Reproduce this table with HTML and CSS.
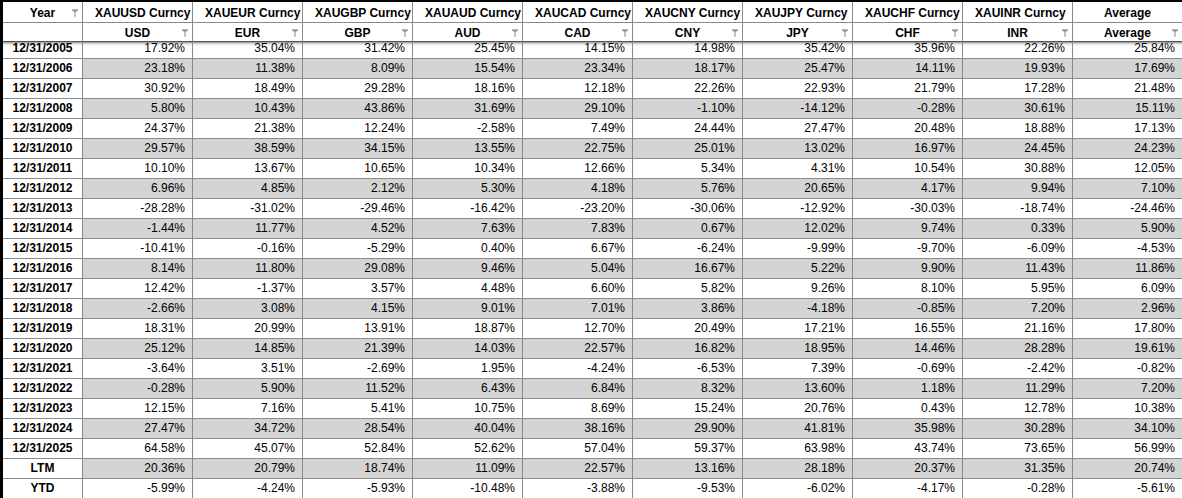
FILE: index.html
```html
<!DOCTYPE html>
<html>
<head>
<meta charset="utf-8">
<link rel="stylesheet" href="styles.css">
</head>
<body>
<div class="frame">
  <div class="head">
    <div class="hrow r1">
      <div class="h f"><span></span><span class="lbl">Year</span><svg class="fi" viewBox="0 0 7 9"><path d="M0 0H7V1.6L4.2 3.6V9H2.8V3.6L0 1.6Z"/></svg></div>
      <div class="h"><span class="lbl">XAUUSD Curncy</span></div>
      <div class="h"><span class="lbl">XAUEUR Curncy</span></div>
      <div class="h"><span class="lbl">XAUGBP Curncy</span></div>
      <div class="h"><span class="lbl">XAUAUD Curncy</span></div>
      <div class="h"><span class="lbl">XAUCAD Curncy</span></div>
      <div class="h"><span class="lbl">XAUCNY Curncy</span></div>
      <div class="h"><span class="lbl">XAUJPY Curncy</span></div>
      <div class="h"><span class="lbl">XAUCHF Curncy</span></div>
      <div class="h"><span class="lbl">XAUINR Curncy</span></div>
      <div class="h"><span class="lbl">Average</span></div>
    </div>
    <div class="hrow r2">
      <div class="h"></div>
      <div class="h f"><span></span><span class="lbl">USD</span><svg class="fi" viewBox="0 0 7 9"><path d="M0 0H7V1.6L4.2 3.6V9H2.8V3.6L0 1.6Z"/></svg></div>
      <div class="h f"><span></span><span class="lbl">EUR</span><svg class="fi" viewBox="0 0 7 9"><path d="M0 0H7V1.6L4.2 3.6V9H2.8V3.6L0 1.6Z"/></svg></div>
      <div class="h f"><span></span><span class="lbl">GBP</span><svg class="fi" viewBox="0 0 7 9"><path d="M0 0H7V1.6L4.2 3.6V9H2.8V3.6L0 1.6Z"/></svg></div>
      <div class="h f"><span></span><span class="lbl">AUD</span><svg class="fi" viewBox="0 0 7 9"><path d="M0 0H7V1.6L4.2 3.6V9H2.8V3.6L0 1.6Z"/></svg></div>
      <div class="h f"><span></span><span class="lbl">CAD</span><svg class="fi" viewBox="0 0 7 9"><path d="M0 0H7V1.6L4.2 3.6V9H2.8V3.6L0 1.6Z"/></svg></div>
      <div class="h f"><span></span><span class="lbl">CNY</span><svg class="fi" viewBox="0 0 7 9"><path d="M0 0H7V1.6L4.2 3.6V9H2.8V3.6L0 1.6Z"/></svg></div>
      <div class="h f"><span></span><span class="lbl">JPY</span><svg class="fi" viewBox="0 0 7 9"><path d="M0 0H7V1.6L4.2 3.6V9H2.8V3.6L0 1.6Z"/></svg></div>
      <div class="h f"><span></span><span class="lbl">CHF</span><svg class="fi" viewBox="0 0 7 9"><path d="M0 0H7V1.6L4.2 3.6V9H2.8V3.6L0 1.6Z"/></svg></div>
      <div class="h f"><span></span><span class="lbl">INR</span><svg class="fi" viewBox="0 0 7 9"><path d="M0 0H7V1.6L4.2 3.6V9H2.8V3.6L0 1.6Z"/></svg></div>
      <div class="h f"><span></span><span class="lbl">Average</span><svg class="fi" viewBox="0 0 7 9"><path d="M0 0H7V1.6L4.2 3.6V9H2.8V3.6L0 1.6Z"/></svg></div>
    </div>
  </div>
  <div class="viewport">
    <div class="body">
      <div class="row first"><div class="y">12/31/2005</div><div class="c">17.92%</div><div class="c">35.04%</div><div class="c">31.42%</div><div class="c">25.45%</div><div class="c">14.15%</div><div class="c">14.98%</div><div class="c">35.42%</div><div class="c">35.96%</div><div class="c">22.26%</div><div class="c">25.84%</div></div>
      <div class="row alt"><div class="y">12/31/2006</div><div class="c">23.18%</div><div class="c">11.38%</div><div class="c">8.09%</div><div class="c">15.54%</div><div class="c">23.34%</div><div class="c">18.17%</div><div class="c">25.47%</div><div class="c">14.11%</div><div class="c">19.93%</div><div class="c">17.69%</div></div>
      <div class="row"><div class="y">12/31/2007</div><div class="c">30.92%</div><div class="c">18.49%</div><div class="c">29.28%</div><div class="c">18.16%</div><div class="c">12.18%</div><div class="c">22.26%</div><div class="c">22.93%</div><div class="c">21.79%</div><div class="c">17.28%</div><div class="c">21.48%</div></div>
      <div class="row alt"><div class="y">12/31/2008</div><div class="c">5.80%</div><div class="c">10.43%</div><div class="c">43.86%</div><div class="c">31.69%</div><div class="c">29.10%</div><div class="c">-1.10%</div><div class="c">-14.12%</div><div class="c">-0.28%</div><div class="c">30.61%</div><div class="c">15.11%</div></div>
      <div class="row"><div class="y">12/31/2009</div><div class="c">24.37%</div><div class="c">21.38%</div><div class="c">12.24%</div><div class="c">-2.58%</div><div class="c">7.49%</div><div class="c">24.44%</div><div class="c">27.47%</div><div class="c">20.48%</div><div class="c">18.88%</div><div class="c">17.13%</div></div>
      <div class="row alt"><div class="y">12/31/2010</div><div class="c">29.57%</div><div class="c">38.59%</div><div class="c">34.15%</div><div class="c">13.55%</div><div class="c">22.75%</div><div class="c">25.01%</div><div class="c">13.02%</div><div class="c">16.97%</div><div class="c">24.45%</div><div class="c">24.23%</div></div>
      <div class="row"><div class="y">12/31/2011</div><div class="c">10.10%</div><div class="c">13.67%</div><div class="c">10.65%</div><div class="c">10.34%</div><div class="c">12.66%</div><div class="c">5.34%</div><div class="c">4.31%</div><div class="c">10.54%</div><div class="c">30.88%</div><div class="c">12.05%</div></div>
      <div class="row alt"><div class="y">12/31/2012</div><div class="c">6.96%</div><div class="c">4.85%</div><div class="c">2.12%</div><div class="c">5.30%</div><div class="c">4.18%</div><div class="c">5.76%</div><div class="c">20.65%</div><div class="c">4.17%</div><div class="c">9.94%</div><div class="c">7.10%</div></div>
      <div class="row"><div class="y">12/31/2013</div><div class="c">-28.28%</div><div class="c">-31.02%</div><div class="c">-29.46%</div><div class="c">-16.42%</div><div class="c">-23.20%</div><div class="c">-30.06%</div><div class="c">-12.92%</div><div class="c">-30.03%</div><div class="c">-18.74%</div><div class="c">-24.46%</div></div>
      <div class="row alt"><div class="y">12/31/2014</div><div class="c">-1.44%</div><div class="c">11.77%</div><div class="c">4.52%</div><div class="c">7.63%</div><div class="c">7.83%</div><div class="c">0.67%</div><div class="c">12.02%</div><div class="c">9.74%</div><div class="c">0.33%</div><div class="c">5.90%</div></div>
      <div class="row"><div class="y">12/31/2015</div><div class="c">-10.41%</div><div class="c">-0.16%</div><div class="c">-5.29%</div><div class="c">0.40%</div><div class="c">6.67%</div><div class="c">-6.24%</div><div class="c">-9.99%</div><div class="c">-9.70%</div><div class="c">-6.09%</div><div class="c">-4.53%</div></div>
      <div class="row alt"><div class="y">12/31/2016</div><div class="c">8.14%</div><div class="c">11.80%</div><div class="c">29.08%</div><div class="c">9.46%</div><div class="c">5.04%</div><div class="c">16.67%</div><div class="c">5.22%</div><div class="c">9.90%</div><div class="c">11.43%</div><div class="c">11.86%</div></div>
      <div class="row"><div class="y">12/31/2017</div><div class="c">12.42%</div><div class="c">-1.37%</div><div class="c">3.57%</div><div class="c">4.48%</div><div class="c">6.60%</div><div class="c">5.82%</div><div class="c">9.26%</div><div class="c">8.10%</div><div class="c">5.95%</div><div class="c">6.09%</div></div>
      <div class="row alt"><div class="y">12/31/2018</div><div class="c">-2.66%</div><div class="c">3.08%</div><div class="c">4.15%</div><div class="c">9.01%</div><div class="c">7.01%</div><div class="c">3.86%</div><div class="c">-4.18%</div><div class="c">-0.85%</div><div class="c">7.20%</div><div class="c">2.96%</div></div>
      <div class="row"><div class="y">12/31/2019</div><div class="c">18.31%</div><div class="c">20.99%</div><div class="c">13.91%</div><div class="c">18.87%</div><div class="c">12.70%</div><div class="c">20.49%</div><div class="c">17.21%</div><div class="c">16.55%</div><div class="c">21.16%</div><div class="c">17.80%</div></div>
      <div class="row alt"><div class="y">12/31/2020</div><div class="c">25.12%</div><div class="c">14.85%</div><div class="c">21.39%</div><div class="c">14.03%</div><div class="c">22.57%</div><div class="c">16.82%</div><div class="c">18.95%</div><div class="c">14.46%</div><div class="c">28.28%</div><div class="c">19.61%</div></div>
      <div class="row"><div class="y">12/31/2021</div><div class="c">-3.64%</div><div class="c">3.51%</div><div class="c">-2.69%</div><div class="c">1.95%</div><div class="c">-4.24%</div><div class="c">-6.53%</div><div class="c">7.39%</div><div class="c">-0.69%</div><div class="c">-2.42%</div><div class="c">-0.82%</div></div>
      <div class="row alt"><div class="y">12/31/2022</div><div class="c">-0.28%</div><div class="c">5.90%</div><div class="c">11.52%</div><div class="c">6.43%</div><div class="c">6.84%</div><div class="c">8.32%</div><div class="c">13.60%</div><div class="c">1.18%</div><div class="c">11.29%</div><div class="c">7.20%</div></div>
      <div class="row"><div class="y">12/31/2023</div><div class="c">12.15%</div><div class="c">7.16%</div><div class="c">5.41%</div><div class="c">10.75%</div><div class="c">8.69%</div><div class="c">15.24%</div><div class="c">20.76%</div><div class="c">0.43%</div><div class="c">12.78%</div><div class="c">10.38%</div></div>
      <div class="row alt"><div class="y">12/31/2024</div><div class="c">27.47%</div><div class="c">34.72%</div><div class="c">28.54%</div><div class="c">40.04%</div><div class="c">38.16%</div><div class="c">29.90%</div><div class="c">41.81%</div><div class="c">35.98%</div><div class="c">30.28%</div><div class="c">34.10%</div></div>
      <div class="row"><div class="y">12/31/2025</div><div class="c">64.58%</div><div class="c">45.07%</div><div class="c">52.84%</div><div class="c">52.62%</div><div class="c">57.04%</div><div class="c">59.37%</div><div class="c">63.98%</div><div class="c">43.74%</div><div class="c">73.65%</div><div class="c">56.99%</div></div>
      <div class="row alt"><div class="y">LTM</div><div class="c">20.36%</div><div class="c">20.79%</div><div class="c">18.74%</div><div class="c">11.09%</div><div class="c">22.57%</div><div class="c">13.16%</div><div class="c">28.18%</div><div class="c">20.37%</div><div class="c">31.35%</div><div class="c">20.74%</div></div>
      <div class="row"><div class="y">YTD</div><div class="c">-5.99%</div><div class="c">-4.24%</div><div class="c">-5.93%</div><div class="c">-10.48%</div><div class="c">-3.88%</div><div class="c">-9.53%</div><div class="c">-6.02%</div><div class="c">-4.17%</div><div class="c">-0.28%</div><div class="c">-5.61%</div></div>
    </div>
  </div>
</div>
</body>
</html>
```

FILE: styles.css
```css
html, body {
  margin: 0;
  padding: 0;
  background: #ffffff;
  overflow: hidden;
}

body {
  font-family: "Liberation Sans", Arial, sans-serif;
  font-size: 12px;
  color: #000000;
  width: 1182px;
  height: 498px;
}

.frame {
  border-top: 2px solid #000000;
  border-left: 3px solid #000000;
  width: 1183px;
  height: 496px;
  display: flex;
  flex-direction: column;
}

.hrow,
.row {
  display: grid;
  grid-template-columns: 80px repeat(10, 110px);
}

.h,
.c,
.y {
  box-sizing: border-box;
  border-right: 1px solid #8a8a8a;
  border-bottom: 1px solid #8a8a8a;
  white-space: nowrap;
  overflow: hidden;
}

.h {
  font-weight: bold;
  text-align: center;
  display: grid;
  grid-template-columns: 12px 1fr 12px;
  align-items: center;
  padding-top: 2px;
}

.h .lbl {
  grid-column: 2;
}

.r1 .h {
  height: 21px;
}

.r2 .h {
  height: 19px;
  border-bottom-color: #555555;
}

.fi {
  grid-column: 3;
  justify-self: end;
  width: 6px;
  height: 8px;
  margin-right: 4px;
  fill: #9a9a9a;
}

.viewport {
  flex: 1;
  overflow: hidden;
}

.body {
  margin-top: -3px;
}

.row .c,
.row .y {
  height: 20px;
  line-height: 19px;
}

.c {
  text-align: right;
  padding-right: 7px;
}

.y {
  font-weight: bold;
  text-align: center;
  background: #ffffff;
}

.row.alt .c {
  background: #d4d4d4;
}

.row.first .c,
.row.first .y {
  background: linear-gradient(to bottom, #8c8c8c 3px, #bcbcbc 4px, #e4e4e4 5px, #ffffff 7px);
}
```
